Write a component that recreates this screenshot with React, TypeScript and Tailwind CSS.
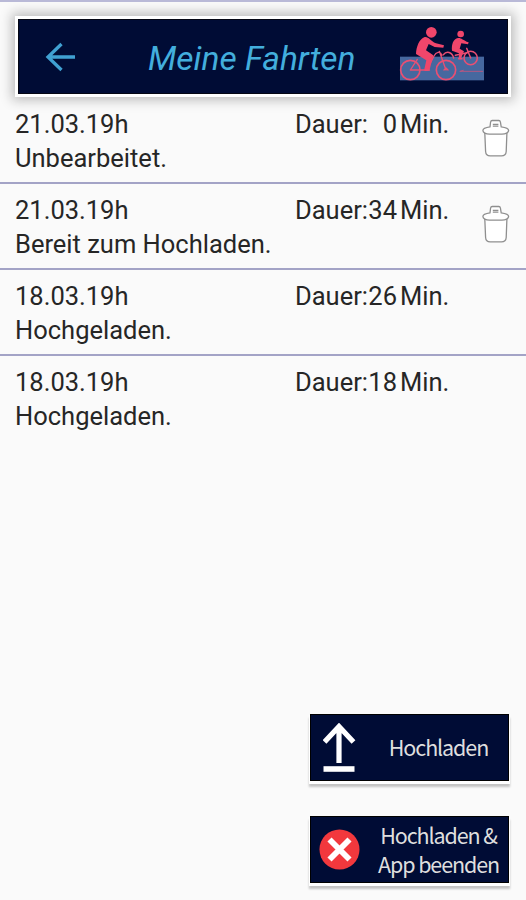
import { ReactNode } from "react";

interface Trip {
    id: number;
    date: string;
    status: string;
    minutes: number;
    canDelete: boolean;
}

const trips: Trip[] = [
    { id: 1, date: "21.03.19h", status: "Unbearbeitet.", minutes: 0, canDelete: true },
    { id: 2, date: "21.03.19h", status: "Bereit zum Hochladen.", minutes: 34, canDelete: true },
    { id: 3, date: "18.03.19h", status: "Hochgeladen.", minutes: 26, canDelete: false },
    { id: 4, date: "18.03.19h", status: "Hochgeladen.", minutes: 18, canDelete: false },
];

function BackArrow() {
    return (
        <svg width="32" height="30" viewBox="0 0 32 30" fill="none" stroke="#40a1d2" strokeWidth="3.3">
            <path d="M31 15H4M17.5 2L4 15L17.5 28" />
        </svg>
    );
}

function CyclistsLogo() {
    return (
        <svg width="88" height="60" viewBox="24 72 264 180" fill="none" stroke="#e94f73" strokeLinecap="round" strokeLinejoin="round">
            <rect x="30" y="170" width="252" height="71" fill="#46689f" stroke="none" />
            {/* rear cyclist */}
            <g strokeWidth="4.5">
                <circle cx="242" cy="174" r="20" />
                <path d="M160 164C170 152 186 156 191 174M242 174L230 145M196 166L232 158" />
                <circle cx="212" cy="102" r="10" fill="#f0466b" stroke="none" />
                <path d="M186 152C184 134 190 116 204 114C213 112 217 120 236 127L234 133L214 130L209 146L222 154L212 178H206L207 160Z" fill="#f0466b" stroke="none" />
                <path d="M206 176H216" />
            </g>
            {/* front cyclist */}
            <g strokeWidth="5">
                <circle cx="61" cy="210" r="29" />
                <circle cx="168" cy="210" r="29" />
                <path d="M61 210L82 178M61 210H112M112 207L132 168C138 156 150 152 156 166M168 210L148 154M162 210L168 204L174 210" strokeWidth="4" />
                <circle cx="124" cy="97" r="16" fill="#f0466b" stroke="none" />
                <path d="M78 162C78 142 88 116 104 111C116 109 120 122 138 130L162 136L160 143L134 141L116 132L108 151L130 166L118 212H102L109 181L88 168Z" fill="#f0466b" stroke="none" />
                <path d="M106 210H118" />
            </g>
            <path d="M212 214H278M210 214L220 211" strokeWidth="2" />
        </svg>
    );
}

function TrashIcon() {
    return (
        <svg width="28" height="38" viewBox="0 0 28 38" fill="#fff" stroke="#8f8f8f" strokeWidth="1.3" strokeLinejoin="round">
            <path d="M2.8 14L3.6 32.5C3.8 35.6 5.2 36.9 8.2 36.9H19.4C22.6 36.9 24 35.6 24.2 32.5L24.9 14" />
            <path d="M8 7.8L8.6 3C8.8 1.8 9.2 1.5 10.2 1.5H16.8C17.8 1.5 18.2 1.8 18.4 3L19.2 7.8C23.4 8.3 26.6 9.6 26.6 11.6C26.6 13.6 23.6 15.2 20 15.2H7.4C3.8 15.2 .9 13.6 .9 11.6C.9 9.6 4 8.3 8 7.8Z" />
            <path d="M10.8 7.2H16.4M10.8 5.4H16.4" strokeWidth="1.2" />
        </svg>
    );
}

function UploadIcon() {
    return (
        <svg width="34" height="50" viewBox="0 0 34 50" fill="none" stroke="#fff">
            <path d="M16 40V4M1.5 19L16 3.5L30.5 19" strokeWidth="5.2" />
            <path d="M.5 46H31.5" strokeWidth="5.6" />
        </svg>
    );
}

function CloseIcon() {
    return (
        <svg width="42" height="42" viewBox="0 0 42 42">
            <circle cx="20.5" cy="20.5" r="20" fill="#f2383d" />
            <path d="M10.5 10.5L30.5 30.5M30.5 10.5L10.5 30.5" stroke="#fff" strokeWidth="5.8" />
        </svg>
    );
}

function ActionButton({ icon, children }: { icon: ReactNode; children: ReactNode }) {
    return (
        <button
            type="button"
            className="flex h-[67px] w-[199px] items-center border border-black bg-[#000c35] font-['Noto_Sans_CJK_SC','Noto_Sans',sans-serif] text-[21.5px] leading-[29px] tracking-[-1.1px] text-[#dedede] shadow-[0_2px_0_1px_#fff,0_5px_2px_1px_#c4c4c4]"
        >
            <span className="flex w-[58px] shrink-0 justify-center">{icon}</span>
            <span className="-mt-[2px] grow whitespace-nowrap text-center">{children}</span>
        </button>
    );
}

function TripRow({ trip, last }: { trip: Trip; last: boolean }) {
    return (
        <li className={`flex h-[86px] pt-[9px] pl-[15px] ${last ? "" : "border-b-2 border-[#a3a3c6]"}`}>
            <div className="w-[280px]">
                <p>{trip.date}</p>
                <p>{trip.status}</p>
            </div>
            <p className="flex w-[187px]">
                <span className="w-[73px]">Dauer:</span>
                <span className="w-[29px] text-right">{trip.minutes}</span>
                <span className="pl-[3px]">Min.</span>
            </p>
            {trip.canDelete && (
                <button type="button" className="mt-[12px] h-[38px]" aria-label="Löschen">
                    <TrashIcon />
                </button>
            )}
        </li>
    );
}

export default function App() {
    return (
        <main className="flex h-[900px] w-[526px] flex-col overflow-hidden border-t-2 border-[#b9b9d7] bg-[#fafafa] font-[Roboto,sans-serif] text-[25.5px] leading-[34px] text-[#262626]">
            <header className="mx-[15px] mt-[14px] flex h-[81px] w-[496px] shrink-0 items-center border-[3px] border-white bg-[#000c35] shadow-[0_0_11px_3px_#bbb,inset_0_0_0_1px_#050714]">
                <button type="button" className="ml-[26px]" aria-label="Zurück">
                    <BackArrow />
                </button>
                <h1 className="ml-[72px] mt-[4px] w-[250px] text-[33.5px] italic text-[#43aedd]">Meine Fahrten</h1>
                <div className="-mt-[6px]">
                    <CyclistsLogo />
                </div>
            </header>
            <ul className="mt-px">
                {trips.map((trip, i) => (
                    <TripRow key={trip.id} trip={trip} last={i === trips.length - 1} />
                ))}
            </ul>
            <div className="mt-auto mr-[17px] mb-[17px] flex flex-col items-end gap-[35px]">
                <ActionButton icon={<UploadIcon />}>Hochladen</ActionButton>
                <ActionButton icon={<CloseIcon />}>
                    Hochladen &amp;
                    <br />
                    App beenden
                </ActionButton>
            </div>
        </main>
    );
}
